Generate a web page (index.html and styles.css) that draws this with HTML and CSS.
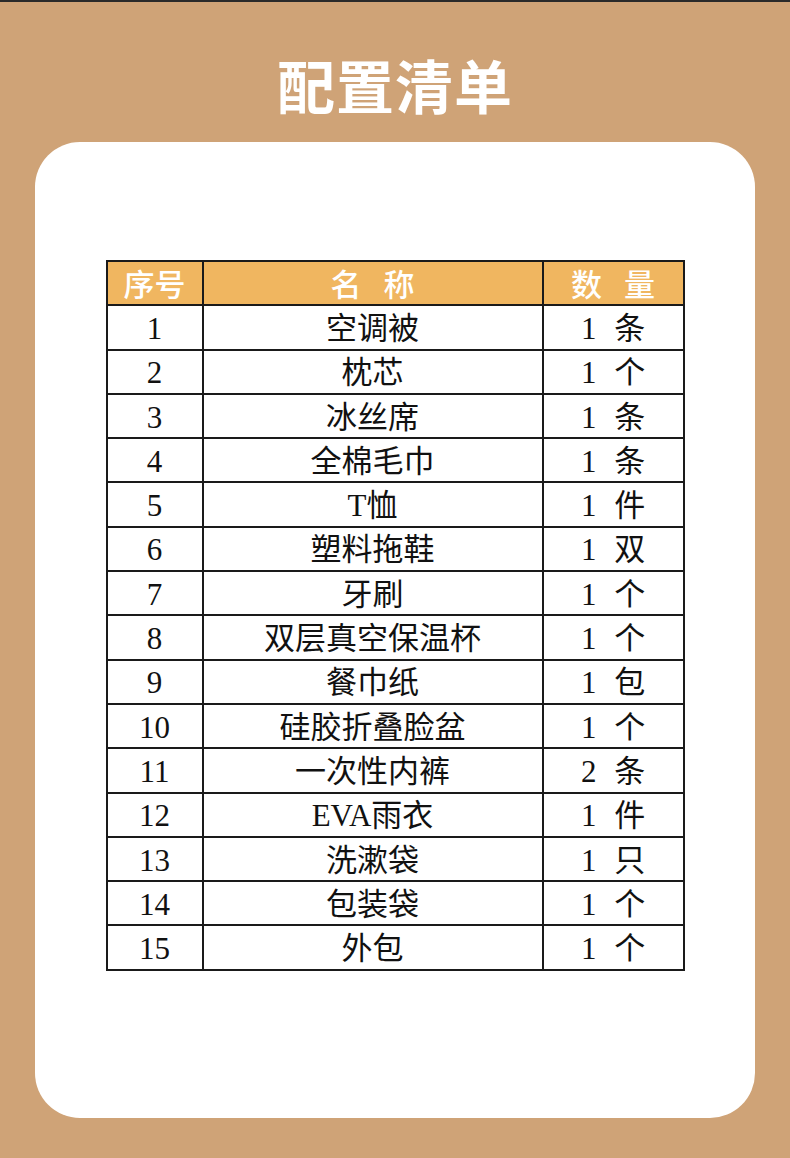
FILE: index.html
```html
<!DOCTYPE html>
<html lang="zh">
<head>
<meta charset="utf-8">
<title>配置清单</title>
<link rel="stylesheet" href="styles.css">
</head>
<body>
<div class="page">
  <h1 class="title">配置清单</h1>
  <div class="card">
    <table class="list">
      <colgroup><col class="c1"><col class="c2"><col class="c3"></colgroup>
      <thead>
        <tr><th>序号</th><th><span class="sp">名</span>称</th><th><span class="sp">数</span>量</th></tr>
      </thead>
      <tbody>
        <tr><td>1</td><td>空调被</td><td class="q">1 条</td></tr>
        <tr><td>2</td><td>枕芯</td><td class="q">1 个</td></tr>
        <tr><td>3</td><td>冰丝席</td><td class="q">1 条</td></tr>
        <tr><td>4</td><td>全棉毛巾</td><td class="q">1 条</td></tr>
        <tr><td>5</td><td>T恤</td><td class="q">1 件</td></tr>
        <tr><td>6</td><td>塑料拖鞋</td><td class="q">1 双</td></tr>
        <tr><td>7</td><td>牙刷</td><td class="q">1 个</td></tr>
        <tr><td>8</td><td>双层真空保温杯</td><td class="q">1 个</td></tr>
        <tr><td>9</td><td>餐巾纸</td><td class="q">1 包</td></tr>
        <tr><td>10</td><td>硅胶折叠脸盆</td><td class="q">1 个</td></tr>
        <tr><td>11</td><td>一次性内裤</td><td class="q">2 条</td></tr>
        <tr><td>12</td><td>EVA雨衣</td><td class="q">1 件</td></tr>
        <tr><td>13</td><td>洗漱袋</td><td class="q">1 只</td></tr>
        <tr><td>14</td><td>包装袋</td><td class="q">1 个</td></tr>
        <tr><td>15</td><td>外包</td><td class="q">1 个</td></tr>
      </tbody>
    </table>
  </div>
</div>
</body>
</html>
```
FILE: styles.css
```css
html, body {
  margin: 0;
  padding: 0;
  background: #cfa377;
}
.page {
  width: 790px;
  height: 1158px;
  border-top: 2px solid #2a2a2a;
  box-sizing: border-box;
  background: #cfa377;
  overflow: hidden;
}
.title {
  margin: 0;
  height: 140px;
  padding-top: 44px;
  box-sizing: border-box;
  text-align: center;
  color: #ffffff;
  font-family: "Noto Sans CJK SC", sans-serif;
  font-weight: 700;
  font-size: 58px;
  line-height: 76px;
  letter-spacing: 1px;
}
.card {
  margin: 0 35px;
  height: 976px;
  background: #ffffff;
  border-radius: 45px;
  padding-top: 118px;
  box-sizing: border-box;
  display: flex;
  justify-content: center;
  align-items: flex-start;
}
.list {
  border-collapse: collapse;
  width: 577px;
  table-layout: fixed;
  border: 2px solid #1a1a1a;
}
.c1 { width: 96px; }
.c2 { width: 340px; }
.c3 { width: 141px; }
.list tr {
  height: 44.3px;
}
.list th, .list td {
  border: 2px solid #1a1a1a;
  padding: 0;
  text-align: center;
  vertical-align: middle;
  line-height: 36px;
  overflow: hidden;
}
.list th {
  background: #f0b660;
  color: #ffffff;
  font-family: "Noto Sans CJK SC", sans-serif;
  font-weight: 500;
  font-size: 31px;
}
.sp {
  margin-right: 22px;
}
.list td {
  color: #111111;
  font-family: "Liberation Serif", "Noto Sans CJK SC", serif;
  font-weight: 400;
  font-size: 31px;
  padding-top: 3px;
}
.list td.q {
  word-spacing: 10px;
}
```
